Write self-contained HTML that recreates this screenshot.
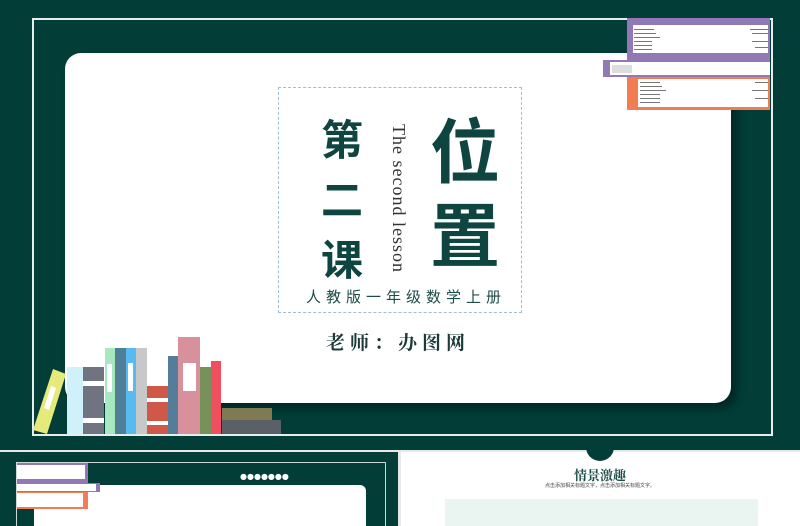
<!DOCTYPE html><html><head><meta charset="utf-8"><style>
*{margin:0;padding:0;box-sizing:border-box}
html,body{width:800px;height:526px;overflow:hidden}
body{background:#e8e8e8;position:relative;font-family:"Liberation Serif","Noto Serif CJK SC",serif}
.a{position:absolute}
.g{background:#023d38}
.ln{position:absolute;height:1px;background:#777}
</style></head><body>
<div class="a g" style="left:0;top:0;width:800px;height:450px"></div>
<div class="a" style="left:32px;top:18px;width:741px;height:418px;border:2px solid #e6efee"></div>
<div class="a" style="left:65px;top:53px;width:666px;height:350px;background:#fff;border-radius:16px;box-shadow:6px 6px 8px rgba(0,0,0,.35)"></div>
<div class="a" style="left:278px;top:87px;width:244px;height:226px;border:1px dashed #9bbde0"></div>
<div class="a" style="left:321px;top:108px;font-size:42px;line-height:60px;color:#0e4540;font-family:'Noto Sans CJK SC',sans-serif;font-weight:bold;width:50px">第<br>二<br>课</div>
<div class="a" style="left:430px;top:106px;font-size:70px;line-height:84px;color:#0e4540;font-family:'Noto Sans CJK SC',sans-serif;font-weight:bold">位<br>置</div>
<div class="a" style="left:388px;top:124px;writing-mode:vertical-rl;font-size:18px;color:#333;letter-spacing:1px">The second lesson</div>
<div class="a" style="left:306px;top:286px;font-size:15px;color:#1c4c48;letter-spacing:5px;font-family:'Noto Sans CJK SC',sans-serif">人教版一年级数学上册</div>
<div class="a" style="left:326px;top:328px;font-size:19px;color:#1c3a38;letter-spacing:5px;font-family:'Noto Serif CJK SC',serif;font-weight:bold">老师：办图网</div>
<!-- top right books -->
<div class="a" style="left:627px;top:18px;width:143px;height:43px;background:#9279b5"></div>
<div class="a" style="left:633px;top:25px;width:135px;height:28px;background:#fff"></div>
<div class="a" style="left:603px;top:60px;width:167px;height:17px;background:#9279b5"></div>
<div class="a" style="left:610px;top:62px;width:160px;height:13px;background:#fff"></div>
<div class="a" style="left:627px;top:77px;width:143px;height:33px;background:#f47c52"></div>
<div class="a" style="left:638px;top:79px;width:130px;height:28px;background:#fff"></div>
<div class="ln" style="left:634px;top:29px;width:20px"></div><div class="ln" style="left:634px;top:33px;width:22px"></div><div class="ln" style="left:634px;top:37px;width:26px"></div><div class="ln" style="left:634px;top:41px;width:18px"></div><div class="ln" style="left:634px;top:45px;width:18px"></div><div class="ln" style="left:634px;top:49px;width:18px"></div>
<div class="ln" style="left:750px;top:29px;width:18px"></div><div class="ln" style="left:752px;top:33px;width:16px"></div><div class="ln" style="left:752px;top:41px;width:16px"></div><div class="ln" style="left:755px;top:47px;width:13px"></div>
<div class="ln" style="left:612px;top:65px;width:20px;background:#ddd;height:8px"></div>
<div class="ln" style="left:640px;top:82px;width:20px"></div><div class="ln" style="left:640px;top:86px;width:22px"></div><div class="ln" style="left:640px;top:90px;width:26px"></div><div class="ln" style="left:640px;top:94px;width:20px"></div><div class="ln" style="left:640px;top:98px;width:20px"></div><div class="ln" style="left:640px;top:102px;width:20px"></div>
<div class="ln" style="left:755px;top:82px;width:13px"></div><div class="ln" style="left:752px;top:90px;width:16px"></div><div class="ln" style="left:755px;top:98px;width:13px"></div>
<!-- shelf books -->
<div class="a" style="left:34px;top:434px;width:248px;height:2px;background:#e6efee"></div>
<svg class="a" style="left:0;top:0" width="100" height="440"><polygon points="33,430 47,434 66,374 53,369" fill="#e5ea7a"/><polygon points="44,408 49,410 56,388 51,386" fill="#fff"/></svg>
<div class="a" style="left:67px;top:367px;width:16px;height:67px;background:#d0f0fa"></div>
<div class="a" style="left:83px;top:367px;width:21px;height:67px;background:#6f7480"></div>
<div class="a" style="left:83px;top:381px;width:21px;height:5px;background:#fff"></div>
<div class="a" style="left:83px;top:418px;width:21px;height:5px;background:#fff"></div>
<div class="a" style="left:105px;top:348px;width:10px;height:86px;background:#a7e8c0"></div>
<div class="a" style="left:107px;top:364px;width:5px;height:28px;background:#fff"></div>
<div class="a" style="left:115px;top:348px;width:11px;height:86px;background:#4f7f98"></div>
<div class="a" style="left:126px;top:348px;width:10px;height:86px;background:#58baf0"></div>
<div class="a" style="left:128px;top:363px;width:5px;height:28px;background:#fff"></div>
<div class="a" style="left:136px;top:348px;width:11px;height:86px;background:#c8c8c8"></div>
<div class="a" style="left:147px;top:386px;width:21px;height:48px;background:#d05848"></div>
<div class="a" style="left:147px;top:398px;width:21px;height:4px;background:#fff"></div>
<div class="a" style="left:147px;top:421px;width:21px;height:4px;background:#fff"></div>
<div class="a" style="left:168px;top:356px;width:10px;height:78px;background:#557d9a"></div>
<div class="a" style="left:178px;top:337px;width:22px;height:97px;background:#d8909c"></div>
<div class="a" style="left:183px;top:363px;width:13px;height:28px;background:#fff"></div>
<div class="a" style="left:200px;top:367px;width:11px;height:67px;background:#76925a"></div>
<div class="a" style="left:211px;top:361px;width:10px;height:73px;background:#f0505e"></div>
<div class="a" style="left:222px;top:408px;width:50px;height:12px;background:#7f7a52"></div>
<div class="a" style="left:222px;top:420px;width:59px;height:14px;background:#5b5f68"></div>
<!-- bottom left thumb -->
<div class="a g" style="left:0;top:452px;width:398px;height:74px"></div>
<div class="a" style="left:16px;top:462px;width:370px;height:70px;border:1px solid #cfd8d6"></div>
<div class="a" style="left:34px;top:485px;width:332px;height:60px;background:#fff;border-radius:6px"></div>
<div class="a" style="left:240px;top:473px;color:#fff;font-size:8px;font-family:'DejaVu Sans',sans-serif;line-height:8px">●●●●●●●</div>
<div class="a" style="left:17px;top:463px;width:71px;height:20px;background:#9279b5"></div>
<div class="a" style="left:17px;top:465px;width:68px;height:14px;background:#fff"></div>
<div class="a" style="left:17px;top:483px;width:83px;height:9px;background:#9279b5"></div>
<div class="a" style="left:17px;top:484px;width:79px;height:7px;background:#fff"></div>
<div class="a" style="left:17px;top:492px;width:71px;height:17px;background:#f47c52"></div>
<div class="a" style="left:17px;top:493px;width:66px;height:14px;background:#fff"></div>
<!-- bottom right thumb -->
<div class="a" style="left:401px;top:452px;width:399px;height:74px;background:#fff"></div>
<div class="a" style="left:586px;top:444px;width:28px;height:17px;background:#023d38;border-radius:0 0 14px 14px"></div>
<div class="a" style="left:550px;top:465px;width:100px;text-align:center;font-size:13px;font-weight:bold;color:#1c4c48;font-family:'Noto Serif CJK SC',serif">情景激趣</div>
<div class="a" style="left:540px;top:482px;width:120px;text-align:center;font-size:5px;color:#444;font-family:'Noto Sans CJK SC',sans-serif">点击添加相关标题文字，点击添加相关标题文字。</div>
<div class="a" style="left:445px;top:499px;width:313px;height:27px;background:#eaf4f0"></div>
</body></html>
